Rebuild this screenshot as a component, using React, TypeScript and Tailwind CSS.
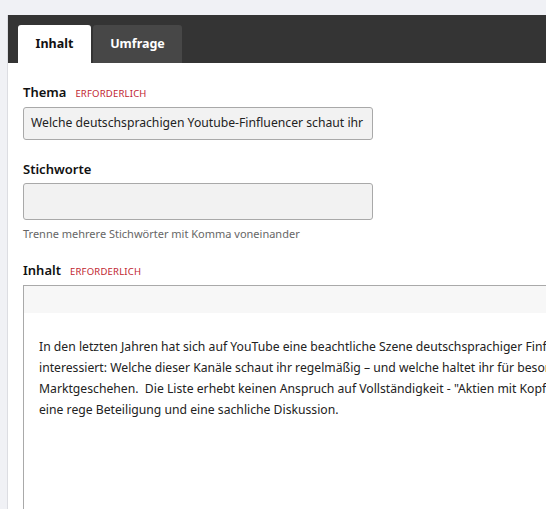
import React from "react";

export default function App() {
  const font = { fontFamily: '"Noto Sans", "Open Sans", sans-serif' } as React.CSSProperties;
  return (
    <div className="w-[546px] h-[509px] overflow-hidden bg-[#f0f1f5] pt-[15px] pl-[7px]" style={font}>
      <div className="w-[600px] h-[520px] border-l border-[#dcdde2] bg-white">
        <div className="h-[48px] bg-[#343434] pt-[10px] pl-[10px] flex gap-[2px]">
          <div className="w-[73px] h-[38px] bg-white rounded-t-[3px] flex items-center justify-center text-[12.5px] font-bold text-[#111]">
            Inhalt
          </div>
          <div className="w-[89px] h-[38px] bg-[#474747] rounded-t-[3px] flex items-center justify-center text-[12.5px] font-bold text-white">
            Umfrage
          </div>
        </div>
        <div className="pl-[15px] pt-[20px]">
          <div className="flex items-baseline gap-[9px] h-[18px]">
            <span className="text-[13px] font-semibold text-[#111]">Thema</span>
            <span className="text-[9.5px] text-[#bf2530] tracking-[0.2px]">ERFORDERLICH</span>
          </div>
          <div className="mt-[6px] w-[350px] h-[33px] bg-[#f2f2f2] border border-[#a9a9a9] rounded-[3px] flex items-center pl-[7px] text-[12.2px] text-[#222] whitespace-nowrap overflow-hidden">
            Welche deutschsprachigen Youtube-Finfluencer schaut ihr
          </div>
          <div className="mt-[20px] h-[18px] text-[13px] font-semibold text-[#111]">Stichworte</div>
          <div className="mt-[5px] w-[350px] h-[37px] bg-[#f2f2f2] border border-[#a9a9a9] rounded-[3px]"></div>
          <div className="mt-[6px] text-[11px] text-[#666]">Trenne mehrere Stichwörter mit Komma voneinander</div>
          <div className="mt-[18px] flex items-baseline gap-[9px] h-[18px]">
            <span className="text-[13px] font-semibold text-[#111]">Inhalt</span>
            <span className="text-[9.5px] text-[#bf2530] tracking-[0.2px]">ERFORDERLICH</span>
          </div>
          <div className="mt-[6px] w-[600px] h-[300px] border border-[#a9a9a9] border-r-0">
            <div className="h-[27px] bg-[#f7f7f7]"></div>
            <div className="pt-[23px] pl-[15px] text-[12.2px] leading-[21px] text-[#222] whitespace-nowrap">
              <div>In den letzten Jahren hat sich auf YouTube eine beachtliche Szene deutschsprachiger Finfluencer entwickelt.</div>
              <div>interessiert: Welche dieser Kanäle schaut ihr regelmäßig – und welche haltet ihr für besonders</div>
              <div>Marktgeschehen.&nbsp; Die Liste erhebt keinen Anspruch auf Vollständigkeit - "Aktien mit Kopf"</div>
              <div>eine rege Beteiligung und eine sachliche Diskussion.</div>
            </div>
          </div>
        </div>
      </div>
    </div>
  );
}
